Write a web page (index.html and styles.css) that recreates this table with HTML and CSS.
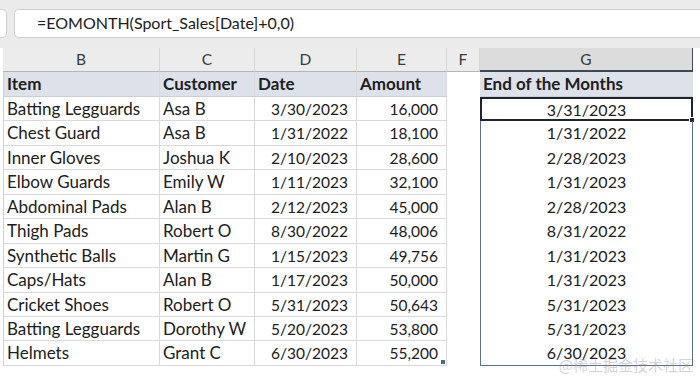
FILE: index.html
```html
<!DOCTYPE html>
<html lang="en">
<head>
  <meta charset="UTF-8">
  <title>EOMONTH</title>
  <link rel="stylesheet" href="styles.css">
</head>
<body>
  <div class="formula-bar">
    <div class="name-box"></div>
    <div class="formula">=EOMONTH(Sport_Sales[Date]+0,0)</div>
  </div>

  <div class="sheet">
    <div class="col-head">B</div>
    <div class="col-head">C</div>
    <div class="col-head">D</div>
    <div class="col-head">E</div>
    <div class="col-head">F</div>
    <div class="col-head selected">G</div>

    <div class="cell head first">Item</div>
    <div class="cell head">Customer</div>
    <div class="cell head">Date</div>
    <div class="cell head">Amount</div>
    <div class="cell blank"></div>
    <div class="cell head result-head">End of the Months</div>

    <div class="cell first">Batting Legguards</div><div class="cell">Asa B</div><div class="cell num">3/30/2023</div><div class="cell num">16,000</div><div class="cell blank"></div><div class="cell result active">3/31/2023<span class="fill-handle"></span></div>
    <div class="cell first">Chest Guard</div><div class="cell">Asa B</div><div class="cell num">1/31/2022</div><div class="cell num">18,100</div><div class="cell blank"></div><div class="cell result">1/31/2022</div>
    <div class="cell first">Inner Gloves</div><div class="cell">Joshua K</div><div class="cell num">2/10/2023</div><div class="cell num">28,600</div><div class="cell blank"></div><div class="cell result">2/28/2023</div>
    <div class="cell first">Elbow Guards</div><div class="cell">Emily W</div><div class="cell num">1/11/2023</div><div class="cell num">32,100</div><div class="cell blank"></div><div class="cell result">1/31/2023</div>
    <div class="cell first">Abdominal Pads</div><div class="cell">Alan B</div><div class="cell num">2/12/2023</div><div class="cell num">45,000</div><div class="cell blank"></div><div class="cell result">2/28/2023</div>
    <div class="cell first">Thigh Pads</div><div class="cell">Robert O</div><div class="cell num">8/30/2022</div><div class="cell num">48,006</div><div class="cell blank"></div><div class="cell result">8/31/2022</div>
    <div class="cell first">Synthetic Balls</div><div class="cell">Martin G</div><div class="cell num">1/15/2023</div><div class="cell num">49,756</div><div class="cell blank"></div><div class="cell result">1/31/2023</div>
    <div class="cell first">Caps/Hats</div><div class="cell">Alan B</div><div class="cell num">1/17/2023</div><div class="cell num">50,000</div><div class="cell blank"></div><div class="cell result">1/31/2023</div>
    <div class="cell first">Cricket Shoes</div><div class="cell">Robert O</div><div class="cell num">5/31/2023</div><div class="cell num">50,643</div><div class="cell blank"></div><div class="cell result">5/31/2023</div>
    <div class="cell first">Batting Legguards</div><div class="cell">Dorothy W</div><div class="cell num">5/20/2023</div><div class="cell num">53,800</div><div class="cell blank"></div><div class="cell result">5/31/2023</div>
    <div class="cell first">Helmets</div><div class="cell">Grant C</div><div class="cell num">6/30/2023</div><div class="cell num">55,200<span class="resize-handle"></span></div><div class="cell blank"></div><div class="cell result last">6/30/2023</div>
  </div>

  <div class="watermark">@稀土掘金技术社区</div>
</body>
</html>
```

FILE: styles.css
```css
* {
  box-sizing: border-box;
}
body {
  margin: 0;
  width: 700px;
  height: 377px;
  overflow: hidden;
  background: #fff;
  font-family: Lato, "Liberation Sans", sans-serif;
  color: #202020;
  position: relative;
}

.formula-bar {
  height: 48px;
  background: #ebebeb;
  padding: 9px 0 10px 0;
  display: flex;
  gap: 7px;
}
.name-box {
  width: 7px;
  background: #fff;
  border: 1px solid #cfcfcf;
  border-left: none;
  border-radius: 0 5px 5px 0;
}
.formula {
  flex: 1;
  background: #fff;
  border: 1px solid #cfcfcf;
  border-right: none;
  border-radius: 5px 0 0 5px;
  padding: 3px 0 0 22px;
  font-size: 16px;
}

.sheet {
  display: grid;
  grid-template-columns: 157px 95px 102px 90px 33px 213px;
  grid-template-rows: 24px 25px repeat(11, 24.45px);
  margin-left: 3px;
  font-size: 17px;
}

.col-head {
  background: #ececec;
  border-right: 1px solid #d6d6d6;
  border-bottom: 1px solid #b5b5b5;
  text-align: center;
  line-height: 23px;
  font-size: 15.5px;
  color: #3a3a3a;
}
.col-head.selected {
  background: #dcdcdc;
  border-bottom: 2px solid #3f4654;
  border-right: 1px solid #3f4654;
}

.cell {
  border-right: 1px solid #d9d9d9;
  border-bottom: 1px solid #d9d9d9;
  padding: 0 3px;
  line-height: 24px;
  white-space: nowrap;
  position: relative;
}
.cell.first {
  border-left: 1px solid #d0d0d0;
}
.cell.head {
  background: #dde2ea;
  font-weight: 700;
  border-bottom-color: #c9ced8;
}
.cell.num {
  text-align: right;
  padding-right: 8px;
  font-size: 15.5px;
}
.cell.blank {
  border: none;
  background: #fff;
}

.cell.result-head {
  border-right: none;
}
.cell.result {
  text-align: center;
  font-size: 16px;
  border-left: 1px solid #5d7090;
  border-right: 1px solid #5d7090;
  border-bottom: none;
}
.cell.result.last {
  border-bottom: 1px solid #5d7090;
}
.cell.active {
  border: 2px solid #1f2530;
  line-height: 21px;
}

.fill-handle {
  position: absolute;
  right: -4px;
  bottom: -4px;
  width: 6px;
  height: 6px;
  background: #1f2530;
  border: 1px solid #fff;
}
.resize-handle {
  position: absolute;
  right: 1px;
  bottom: 1px;
  width: 4px;
  height: 4px;
  background: #4a6a9a;
}

.watermark {
  position: absolute;
  right: 7px;
  bottom: 3px;
  font-family: "Noto Sans CJK SC", sans-serif;
  font-size: 15px;
  line-height: 18px;
  color: rgba(140, 140, 140, 0.4);
}
```
